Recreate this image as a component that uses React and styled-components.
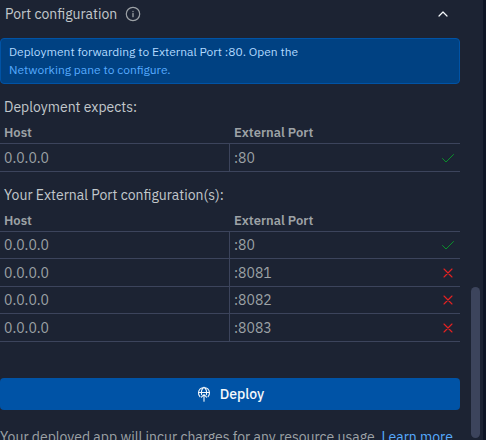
import React from "react";
import styled, { createGlobalStyle } from "styled-components";

const GlobalStyle = createGlobalStyle`
  *, *::before, *::after { box-sizing: border-box; }
  body {
    margin: 0;
    background: #0e1525;
    color: #c2c8cc;
    font-family: "IBM Plex Sans", Roboto, "Liberation Sans", sans-serif;
    font-size: 14px;
    line-height: 20px;
  }
`;

const Page = styled.div`
  display: flex;
  height: 100vh;
  overflow: hidden;
  padding-right: 3px;
`;

const Panel = styled.main`
  flex: 1;
  min-width: 0;
  display: flex;
  gap: 11px;
  padding-right: 3px;
  background: #1c2333;
`;

const Content = styled.div`
  flex: 1;
  min-width: 0;
`;

const ScrollTrack = styled.div`
  display: flex;
  flex-direction: column;
  justify-content: flex-end;
  width: 9px;
  padding-bottom: 2px;
`;

const ScrollThumb = styled.div`
  height: 151px;
  border-radius: 5px;
  background: #3c445c;
`;

const Header = styled.header`
  display: flex;
  align-items: center;
  gap: 8px;
  height: 28px;
  padding: 0 9px 0 5px;
`;

const Title = styled.h2`
  margin: 0;
  font-size: 14px;
  font-weight: 400;
`;

const IconButton = styled.button`
  display: flex;
  padding: 0;
  border: 0;
  background: none;
  color: ${(p) => (p.$bright ? "#f5f9fc" : "#9da2a6")};
  margin-left: ${(p) => (p.$end ? "auto" : "0")};
`;

const Notice = styled.p`
  margin: 10px 0 0;
  padding: 4px 8px;
  border: 1px solid #0053a6;
  border-radius: 4px;
  background: #004182;
  color: #b2d9ff;
  font-size: 12px;
  line-height: 18px;
`;

const Link = styled.a`
  color: #57abff;
  text-decoration: none;
`;

const NoticeLink = styled(Link)`
  display: block;
`;

const Section = styled.section`
  margin-top: 13px;
`;

const SectionTitle = styled.h3`
  margin: 0;
  padding: 0 4px;
  font-size: 14px;
  font-weight: 400;
`;

const Table = styled.table`
  width: 100%;
  margin-top: 5px;
  border-collapse: separate;
  border-spacing: 0;
  table-layout: fixed;
  color: #9da2a6;
`;

const HeadCell = styled.th`
  height: 22px;
  padding: 0 4px;
  border-bottom: 1px solid #3c445c;
  text-align: left;
  font-size: 13px;
  font-weight: 600;
  line-height: 20px;
`;

const Row = styled.tr`
  height: 27px;
  &:nth-child(even), &:only-child { height: 28px; }
`;

const Cell = styled.td`
  padding: 0 4px;
  border-bottom: 1px solid #3c445c;
  &:first-child { border-right: 1px solid #3c445c; }
`;

const PortLine = styled.div`
  display: flex;
  align-items: center;
  justify-content: space-between;
`;

const DeployButton = styled.button`
  display: flex;
  align-items: center;
  justify-content: center;
  gap: 8px;
  width: 100%;
  height: 32px;
  margin-top: 36px;
  border: 0;
  border-radius: 4px;
  background: #0053a6;
  color: #f5f9fc;
  font: inherit;
  font-weight: 500;
`;

const Footnote = styled.p`
  margin: 17px 0 0;
  color: #9da2a6;
  white-space: nowrap;
`;

const Stroke = styled.svg.attrs({ viewBox: "0 0 16 16", width: 16, height: 16 })`
  display: block;
  fill: none;
  stroke: ${(p) => p.$color || "currentColor"};
  stroke-width: 1;
  stroke-linecap: round;
  stroke-linejoin: round;
`;

const InfoIcon = () => (
  <Stroke aria-hidden="true">
    <circle cx="8" cy="8" r="6.7" strokeWidth="1.2" />
    <path d="M8 7.5v3.2M8 5.3v.2" strokeWidth="1.3" />
  </Stroke>
);

const ChevronUp = () => (
  <Stroke aria-hidden="true">
    <path d="M4 10l4-4 4 4" strokeWidth="1.2" />
  </Stroke>
);

const Check = () => (
  <Stroke $color="#0a8f2b" aria-hidden="true">
    <path d="M2.5 8.5l3.5 3.5 7.5-7.5" />
  </Stroke>
);

const Cross = () => (
  <Stroke $color="#e52222" aria-hidden="true">
    <path d="M4 4l8 8M12 4l-8 8" strokeWidth="1.1" />
  </Stroke>
);

const DeployIcon = () => (
  <Stroke aria-hidden="true">
    <path d="M3.9 10.6A5.5 5.5 0 1 1 12.1 10.6M2.5 6.5h11M5.6 8.6C5 5.6 6 2.6 8 1.2c2 1.4 3 4.4 2.4 7.4M8 15.2V8.8M5.4 11.2L8 8.6l2.6 2.6" strokeWidth="1.1" />
  </Stroke>
);

function PortTable({ title, rows }) {
  return (
    <Section>
      <SectionTitle>{title}</SectionTitle>
      <Table aria-label={title}>
        <thead>
          <tr>
            <HeadCell scope="col">Host</HeadCell>
            <HeadCell scope="col">External Port</HeadCell>
          </tr>
        </thead>
        <tbody>
          {rows.map(({ port, ok }) => (
            <Row key={port}>
              <Cell>0.0.0.0</Cell>
              <Cell>
                <PortLine>
                  {port}
                  {ok ? <Check /> : <Cross />}
                </PortLine>
              </Cell>
            </Row>
          ))}
        </tbody>
      </Table>
    </Section>
  );
}

const expected = [{ port: ":80", ok: true }];
const configured = [
  { port: ":80", ok: true },
  { port: ":8081", ok: false },
  { port: ":8082", ok: false },
  { port: ":8083", ok: false },
];

export default function App() {
  return (
    <Page>
      <GlobalStyle />
      <Panel>
        <Content>
          <Header>
            <Title>Port configuration</Title>
            <IconButton type="button" aria-label="About port configuration">
              <InfoIcon />
            </IconButton>
            <IconButton type="button" $bright $end aria-label="Collapse">
              <ChevronUp />
            </IconButton>
          </Header>
          <Notice>
            Deployment forwarding to External Port :80. Open the
            <NoticeLink href="#networking">Networking pane to configure.</NoticeLink>
          </Notice>
          <PortTable title="Deployment expects:" rows={expected} />
          <PortTable title="Your External Port configuration(s):" rows={configured} />
          <DeployButton type="button">
            <DeployIcon />
            Deploy
          </DeployButton>
          <Footnote>
            Your deployed app will incur charges for any resource usage. <Link href="#billing">Learn more.</Link>
          </Footnote>
        </Content>
        <ScrollTrack aria-hidden="true">
          <ScrollThumb />
        </ScrollTrack>
      </Panel>
    </Page>
  );
}
